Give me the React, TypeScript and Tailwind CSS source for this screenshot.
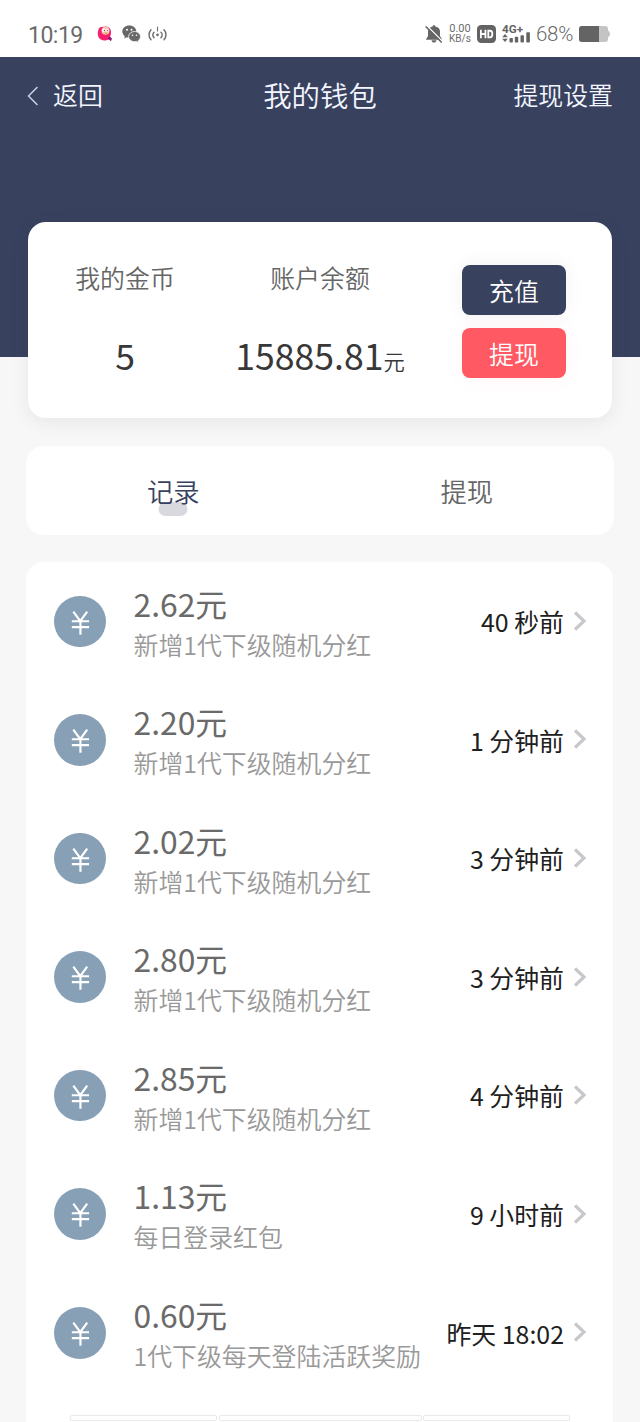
import React from "react";

type Entry = { amount: string; note: string; time: string };

const entries: Entry[] = [
  { amount: "2.62元", note: "新增1代下级随机分红", time: "40 秒前" },
  { amount: "2.20元", note: "新增1代下级随机分红", time: "1 分钟前" },
  { amount: "2.02元", note: "新增1代下级随机分红", time: "3 分钟前" },
  { amount: "2.80元", note: "新增1代下级随机分红", time: "3 分钟前" },
  { amount: "2.85元", note: "新增1代下级随机分红", time: "4 分钟前" },
  { amount: "1.13元", note: "每日登录红包", time: "9 小时前" },
  { amount: "0.60元", note: "1代下级每天登陆活跃奖励", time: "昨天 18:02" },
];

function PinkBirdIcon() {
  return (
    <svg className="h-4 w-4 shrink-0" viewBox="0 0 16 16">
      <path d="M1.500 3.500C2.500.5 5 1 8 .5c3 0 6 1.500 6 5.500 0 2.500-.5 4-1 5l2 1.500-1 2.500-2.500-1.500C8 15.500 3 14.500 1.500 11 .5 8.500.5 6 1.500 3.500z" fill="#f51f6b" />
      <circle cx="8.500" cy="4.800" r="4" fill="#f8c9b0" />
      <circle cx="7" cy="4.300" r="1.800" fill="#fff" />
      <circle cx="10.500" cy="4.500" r="1.400" fill="#fff" />
      <circle cx="7.500" cy="4.500" r=".7" fill="#a62b32" />
      <circle cx="10.600" cy="4.600" r=".6" fill="#a62b32" />
      <path d="M7.500 6.800 9 8.500l1.500-1.700z" fill="#f28a22" />
      <path d="m12 10.500 2.500 1.500-.5 3-1.500-1.500-1.500-.5z" fill="#76208f" />
    </svg>
  );
}

function WechatIcon() {
  return (
    <svg className="h-[18px] w-[19px] shrink-0" viewBox="0 0 19 18">
      <path d="M7.300.6C3.300.6.300 3.200.300 6.600c0 1.900 1 3.500 2.500 4.600l-.5 2.200 2.500-1.200c.8.2 1.600.4 2.500.4 4 0 7-2.600 7-6s-3-6-7-6z" fill="#686868" />
      <path d="M12.500 6.500c-3.300 0-5.900 2.300-5.900 5.100s2.600 5.100 5.900 5.100c.8 0 1.500-.1 2.100-.3l2.200 1-.5-1.900c1.300-.9 2.200-2.300 2.200-3.900 0-2.800-2.700-5.100-6-5.100z" fill="#686868" stroke="#fff" strokeWidth=".8" />
      <g fill="#fff">
        <circle cx="5" cy="4.800" r="1" />
        <circle cx="9.500" cy="4.800" r="1" />
        <circle cx="10.500" cy="10.300" r=".8" />
        <circle cx="14.500" cy="10.300" r=".8" />
      </g>
    </svg>
  );
}

function HotspotIcon() {
  return (
    <svg className="h-4 w-[19px] shrink-0" viewBox="0 0 19 16" fill="none" stroke="#707070" strokeWidth="1.500" strokeLinecap="round">
      <path d="M3 3.800C.4 6.500.4 11 3 13.700M6 6.200c-1.500 1.500-1.500 3.900 0 5.400M16 3.800c2.600 2.700 2.600 7.200 0 9.900M13 6.200c1.500 1.500 1.500 3.900 0 5.400" />
      <path d="M9.500 1v4" strokeWidth="1.100" />
      <circle cx="9.500" cy="8.800" r="1.400" fill="#707070" stroke="none" />
    </svg>
  );
}

function MutedBellIcon() {
  return (
    <svg className="h-5 w-[18px] shrink-0" viewBox="0 0 18 20">
      <path d="M9 1.200c-.9 0-1.300.6-1.400 1.200C4.600 3 3 5 3 7.500v4.600L1.200 15v.7h15.600V15L15 12.100V7.500c0-2.500-1.600-4.500-4.600-5.100C10.300 1.800 9.900 1.200 9 1.200zM6.500 16.200c.2 1.500 1.300 2.400 2.500 2.400s2.300-.9 2.500-2.400z" fill="#666" />
      <path d="m1.900 1.700 16 16" stroke="#fff" strokeWidth="1.300" />
      <path d="m.7 2.500 16 16" stroke="#666" strokeWidth="1.700" />
    </svg>
  );
}

function SignalIcon() {
  return (
    <svg className="h-[20px] w-[30px] shrink-0" viewBox="0 0 30 20" fill="#636363">
      <text x="1" y="8.700" fontFamily="Roboto" fontSize="11" fontWeight="700" textLength="21" lengthAdjust="spacingAndGlyphs">4G+</text>
      <path d="m4 10 2.800 3.200H1.200zM1.200 14.800h5.600L4 18z" />
      <rect x="8.500" y="14" width="3.400" height="4.500" rx=".8" />
      <rect x="13.800" y="12.800" width="3.400" height="5.700" rx=".8" />
      <rect x="19.500" y="11.200" width="3.400" height="7.300" rx=".8" />
      <rect x="25.300" y="8.200" width="3.600" height="10.300" rx=".8" />
    </svg>
  );
}

function BatteryIcon() {
  return (
    <svg className="h-4 w-8 shrink-0" viewBox="0 0 32 16">
      <path d="M3 0h23q3 0 3 3v1.500q2 .6 2 3.500t-2 3.500V13q0 3-3 3H3q-3 0-3-3V3q0-3 3-3z" fill="#c4c4c4" />
      <path d="M3 0h17v16H3q-3 0-3-3V3q0-3 3-3z" fill="#646464" />
    </svg>
  );
}

function StatusBar() {
  return (
    <div className="flex h-[57px] shrink-0 items-start bg-white pt-[14px] pr-[29px] pl-[28px] font-[Roboto,sans-serif] font-normal text-[#6b6b6b]">
      <div className="flex h-10 grow items-start">
        <span className="w-[69px] text-[23px] leading-[43px] tracking-[-0.5px]">10:19</span>
        <div className="flex h-[40px] items-center">
          <PinkBirdIcon />
          <span className="w-[9px]" />
          <WechatIcon />
          <span className="w-[7px]" />
          <HotspotIcon />
        </div>
      </div>
      <div className="flex h-10 items-center">
        <MutedBellIcon />
        <div className="ml-[5px] flex w-[24px] flex-col items-center text-[10px] leading-[10px]">
          <span className="text-[11px]">0.00</span>
          <span className="whitespace-nowrap">KB/s</span>
        </div>
        <svg className="ml-[5px] h-[18px] w-[19px]" viewBox="0 0 18 17">
          <rect width="18" height="17" rx="4" fill="#636363" />
          <path d="M3.700 4.500v8M8 4.500v8M3.700 8.500H8M10.700 5.400h1.600c3 0 3 6.200 0 6.200h-1.600z" fill="none" stroke="#fff" strokeWidth="1.700" />
        </svg>
        <div className="ml-[5px]"><SignalIcon /></div>
        <span className="ml-[5px] w-[43px] text-[20.500px] leading-[42px] font-light tracking-[-0.3px] whitespace-nowrap">68%</span>
        <BatteryIcon />
      </div>
    </div>
  );
}

function EntryRow({ entry }: { entry: Entry }) {
  return (
    <li className="flex h-[118.600px] items-start pr-[26px] pl-[28px]">
      <div className="mt-[34px] h-[51.500px] w-[51.500px] shrink-0 rounded-full bg-[#87a0b6]">
        <svg className="h-full w-full" viewBox="0 0 52 52" fill="none" stroke="#fff" strokeWidth="2.200">
          <path d="m19.500 15.800 7 9.700 7-9.700M18 25.500h17.400M18 31.500h17.400M26.700 25.500V39" />
        </svg>
      </div>
      <div className="mt-[20px] ml-[28px] grow whitespace-nowrap">
        <div className="text-[31.800px] leading-[43px] font-normal text-[#6a6a6a]">{entry.amount}</div>
        <div className="text-[24.900px] leading-[39px] text-[#999]">{entry.note}</div>
      </div>
      <div className="flex h-[118.600px] items-center">
        <span className="pt-[2px] text-[24.900px] font-normal whitespace-nowrap text-[#202020]">{entry.time}</span>
        <svg className="ml-[9px] h-[22px] w-[14px]" viewBox="0 0 14 22" fill="none" stroke="#c8c8cc" strokeWidth="3.200">
          <path d="m2 2.500 9 8.500-9 8.500" />
        </svg>
      </div>
    </li>
  );
}

export default function App() {
  return (
    <div className="flex h-[1422px] w-[640px] flex-col overflow-hidden bg-[#f7f7f7] font-['Noto_Sans_CJK_SC',sans-serif] font-[350]">
      <StatusBar />
      <header className="h-[300px] shrink-0 bg-[#38425f] text-[#f4f6ff]">
        <nav className="grid h-[76px] grid-cols-3 items-center px-[27px] text-[24.900px]">
          <div className="flex items-center">
            <svg className="mt-[2px] h-5 w-[11px]" viewBox="0 0 11 20" fill="none" stroke="#cbd1e2" strokeWidth="1.500">
              <path d="m10.500 1-9 9 9 9" />
            </svg>
            <span className="ml-[15px]">返回</span>
          </div>
          <h1 className="text-center text-[28.400px] font-[350]">我的钱包</h1>
          <span className="text-right">提现设置</span>
        </nav>
      </header>

      <section className="relative mx-[28px] -mt-[135px] flex h-[196px] shrink-0 rounded-[18px] bg-white shadow-[0_4px_20px_rgba(0,0,0,0.07)]">
        <div className="flex w-[194px] flex-col items-center pt-[33px]">
          <span className="text-[24.900px] leading-[44px] text-[#666]">我的金币</span>
          <span className="mt-[30px] text-[35.600px] leading-[52px] font-normal text-[#383838]">5</span>
        </div>
        <div className="flex w-[196px] flex-col items-center pt-[33px]">
          <span className="text-[24.900px] leading-[44px] text-[#666]">账户余额</span>
          <span className="mt-[30px] text-[35.600px] leading-[52px] font-normal whitespace-nowrap text-[#383838]">
            15885.81<span className="text-[21.300px] font-[350]">元</span>
          </span>
        </div>
        <div className="ml-[44px] flex flex-col gap-[12.500px] pt-[43px] text-[24.900px] leading-[50px] text-white">
          <button className="h-[50px] w-[104px] rounded-[8px] bg-[#38425f] shadow-[0_0_20px_rgba(0,0,0,0.06)]">充值</button>
          <button className="h-[50px] w-[104px] rounded-[8px] bg-[#ff5a64] shadow-[0_0_20px_rgba(255,90,100,0.06)]">提现</button>
        </div>
      </section>

      <section className="mx-[26.400px] mt-[28px] grid h-[89px] shrink-0 grid-cols-2 rounded-[18px] bg-white text-center text-[26.300px] leading-[89px]">
        <div className="relative text-[#38425f]">
          <span className="absolute top-[56px] left-1/2 h-[14px] w-[29px] -translate-x-1/2 rounded-[7px] bg-[#d7d9df]" />
          <span className="relative">记录</span>
        </div>
        <div className="text-[#666]">提现</div>
      </section>

      <section className="mr-[27px] ml-[26px] mt-[26.500px] h-[900px] shrink-0 rounded-t-[18px] bg-white">
        <ul>
          {entries.map((entry) => (
            <EntryRow key={entry.time + entry.amount} entry={entry} />
          ))}
        </ul>
        <div className="mt-[23.100px] ml-[44px] flex gap-px">
          <div className="h-[6px] w-[147px] rounded-[2px] border border-[#e9e9e9]" />
          <div className="ml-px h-[6px] w-[203px] rounded-[2px] border border-[#e9e9e9]" />
          <div className="h-[6px] w-[147px] rounded-[2px] border border-[#e9e9e9]" />
        </div>
      </section>
    </div>
  );
}
